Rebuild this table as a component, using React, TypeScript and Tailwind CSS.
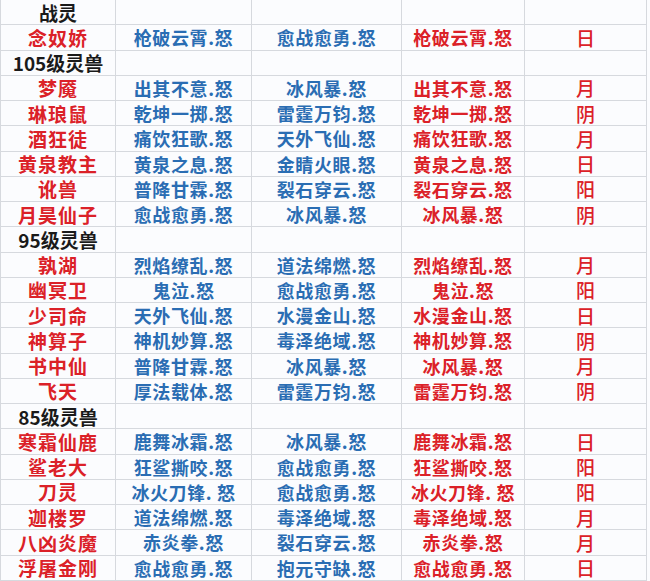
import React from "react";

type Row =
  | { kind: "head"; title: string }
  | { kind: "pet"; name: string; a: string; b: string; c: string; d: string };

const rows: Row[] = [
  { kind: "head", title: "战灵" },
  { kind: "pet", name: "念奴娇", a: "枪破云霄.怒", b: "愈战愈勇.怒", c: "枪破云霄.怒", d: "日" },
  { kind: "head", title: "105级灵兽" },
  { kind: "pet", name: "梦魇", a: "出其不意.怒", b: "冰风暴.怒", c: "出其不意.怒", d: "月" },
  { kind: "pet", name: "琳琅鼠", a: "乾坤一掷.怒", b: "雷霆万钧.怒", c: "乾坤一掷.怒", d: "阴" },
  { kind: "pet", name: "酒狂徒", a: "痛饮狂歌.怒", b: "天外飞仙.怒", c: "痛饮狂歌.怒", d: "月" },
  { kind: "pet", name: "黄泉教主", a: "黄泉之息.怒", b: "金睛火眼.怒", c: "黄泉之息.怒", d: "日" },
  { kind: "pet", name: "讹兽", a: "普降甘霖.怒", b: "裂石穿云.怒", c: "裂石穿云.怒", d: "阳" },
  { kind: "pet", name: "月昊仙子", a: "愈战愈勇.怒", b: "冰风暴.怒", c: "冰风暴.怒", d: "阴" },
  { kind: "head", title: "95级灵兽" },
  { kind: "pet", name: "孰湖", a: "烈焰缭乱.怒", b: "道法绵燃.怒", c: "烈焰缭乱.怒", d: "月" },
  { kind: "pet", name: "幽冥卫", a: "鬼泣.怒", b: "愈战愈勇.怒", c: "鬼泣.怒", d: "阳" },
  { kind: "pet", name: "少司命", a: "天外飞仙.怒", b: "水漫金山.怒", c: "水漫金山.怒", d: "日" },
  { kind: "pet", name: "神算子", a: "神机妙算.怒", b: "毒泽绝域.怒", c: "神机妙算.怒", d: "阴" },
  { kind: "pet", name: "书中仙", a: "普降甘霖.怒", b: "冰风暴.怒", c: "冰风暴.怒", d: "月" },
  { kind: "pet", name: "飞天", a: "厚法载体.怒", b: "雷霆万钧.怒", c: "雷霆万钧.怒", d: "阴" },
  { kind: "head", title: "85级灵兽" },
  { kind: "pet", name: "寒霜仙鹿", a: "鹿舞冰霜.怒", b: "冰风暴.怒", c: "鹿舞冰霜.怒", d: "日" },
  { kind: "pet", name: "鲨老大", a: "狂鲨撕咬.怒", b: "愈战愈勇.怒", c: "狂鲨撕咬.怒", d: "阳" },
  { kind: "pet", name: "刀灵", a: "冰火刀锋. 怒", b: "愈战愈勇.怒", c: "冰火刀锋. 怒", d: "阳" },
  { kind: "pet", name: "迦楼罗", a: "道法绵燃.怒", b: "毒泽绝域.怒", c: "毒泽绝域.怒", d: "月" },
  { kind: "pet", name: "八凶炎魔", a: "赤炎拳.怒", b: "裂石穿云.怒", c: "赤炎拳.怒", d: "月" },
  { kind: "pet", name: "浮屠金刚", a: "愈战愈勇.怒", b: "抱元守缺.怒", c: "愈战愈勇.怒", d: "日" },
];

const cell = "flex items-center justify-center border-r border-b border-[#d6d9de] h-[25.26px]";

export default function App() {
  return (
    <div
      className="w-[650px] h-[581px] overflow-hidden bg-[#fbfcfe] font-bold leading-none"
      style={{ fontFamily: '"Noto Sans CJK SC", "Noto Sans", sans-serif' }}
    >
      <div className="w-[647px] border-l border-[#d6d9de]">
        {rows.map((r, i) =>
          r.kind === "head" ? (
            <div key={i} className="grid grid-cols-[115px_136px_150px_123px_122px]">
              <div className={`${cell} text-[19px] text-[#1a1a1a]`}>{r.title}</div>
              <div className={cell}></div>
              <div className={cell}></div>
              <div className={cell}></div>
              <div className={cell}></div>
            </div>
          ) : (
            <div key={i} className="grid grid-cols-[115px_136px_150px_123px_122px]">
              <div className={`${cell} text-[19px] tracking-[1px] text-[#db2128]`}>{r.name}</div>
              <div className={`${cell} text-[18px] tracking-[0.6px] text-[#2a6db3]`}>{r.a}</div>
              <div className={`${cell} text-[18px] tracking-[0.6px] text-[#2a6db3]`}>{r.b}</div>
              <div className={`${cell} text-[18px] tracking-[0.6px] text-[#db2128]`}>{r.c}</div>
              <div className={`${cell} text-[19px] text-[#db2128] font-medium`}>{r.d}</div>
            </div>
          )
        )}
      </div>
    </div>
  );
}
